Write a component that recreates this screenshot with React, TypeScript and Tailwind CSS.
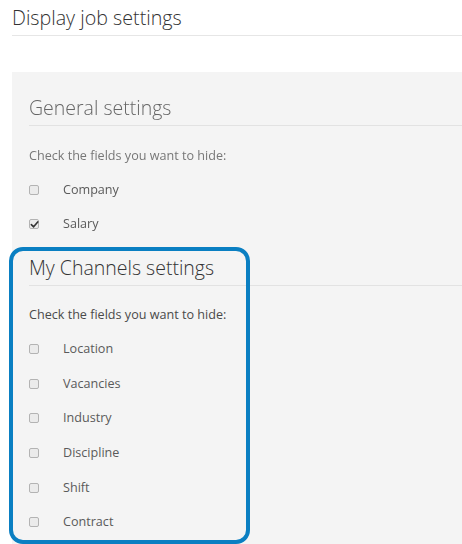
import React from "react"

interface FieldRowProps {
  label: string
  checked?: boolean
  height: string
}

function FieldRow({ label, checked = false, height }: FieldRowProps) {
  return (
    <div className={`flex items-center ${height}`}>
      <span className="relative flex h-[10px] w-[10px] items-center justify-center rounded-[2px] border border-[#b3b3b3] bg-[#ebebeb]">
        {checked && (
          <svg className="absolute h-[9px] w-[9px]" viewBox="0 0 10 10" fill="none">
            <path d="M1.5 5.2 L4 7.6 L8.6 2.2" stroke="#333" strokeWidth={1.8} strokeLinecap="round" strokeLinejoin="round" />
          </svg>
        )}
      </span>
      <span className="ml-[24px] text-[12.6px] leading-5 text-[#5a5a5a]">{label}</span>
    </div>
  )
}

export default function App() {
  const channelFields = ["Location", "Vacancies", "Industry", "Discipline", "Shift", "Contract"]

  return (
    <div className="relative h-[544px] w-[462px] overflow-hidden bg-white font-['Open_Sans',sans-serif]">
      {/* Page title */}
      <div className="pl-3">
        <h1 className="h-9 border-b border-[#e6e6e6] text-[19.7px] font-light leading-[36px] text-[#333]">Display job settings</h1>
      </div>

      {/* Settings panel */}
      <div className="ml-3 mt-9 h-[480px] bg-[#f4f4f4] pl-[17px]">
        {/* General settings (out of focus in the screenshot) */}
        <div className="blur-[0.7px]">
          <div className="pt-[22px]">
            <h2 className="border-b border-[#e2e2e2] pb-[3px] text-[19.5px] font-light leading-7 text-[#666]">General settings</h2>
          </div>
          <p className="mt-5 text-[12.6px] leading-5 text-[#777]">Check the fields you want to hide:</p>
          <div className="mt-[7px]">
            <FieldRow label="Company" height="h-[34px]" />
            <FieldRow label="Salary" checked height="h-[34px]" />
          </div>
        </div>

        {/* My Channels settings */}
        <div className="mt-[13px]">
          <h2 className="border-b border-[#e2e2e2] pb-[3px] text-[19.5px] font-light leading-7 text-[#333]">My Channels settings</h2>
          <p className="mt-[19px] text-[12.6px] leading-5 text-[#4a4a4a]">Check the fields you want to hide:</p>
          <div className="mt-[7px]">
            {channelFields.map((f) => (
              <FieldRow key={f} label={f} height="h-[34.6px]" />
            ))}
          </div>
        </div>
      </div>

      {/* Highlight annotation */}
      <div className="pointer-events-none absolute left-[9px] top-[247px] h-[297px] w-[241px] rounded-[14px] border-4 border-[#0a7fc2]" />
    </div>
  )
}
